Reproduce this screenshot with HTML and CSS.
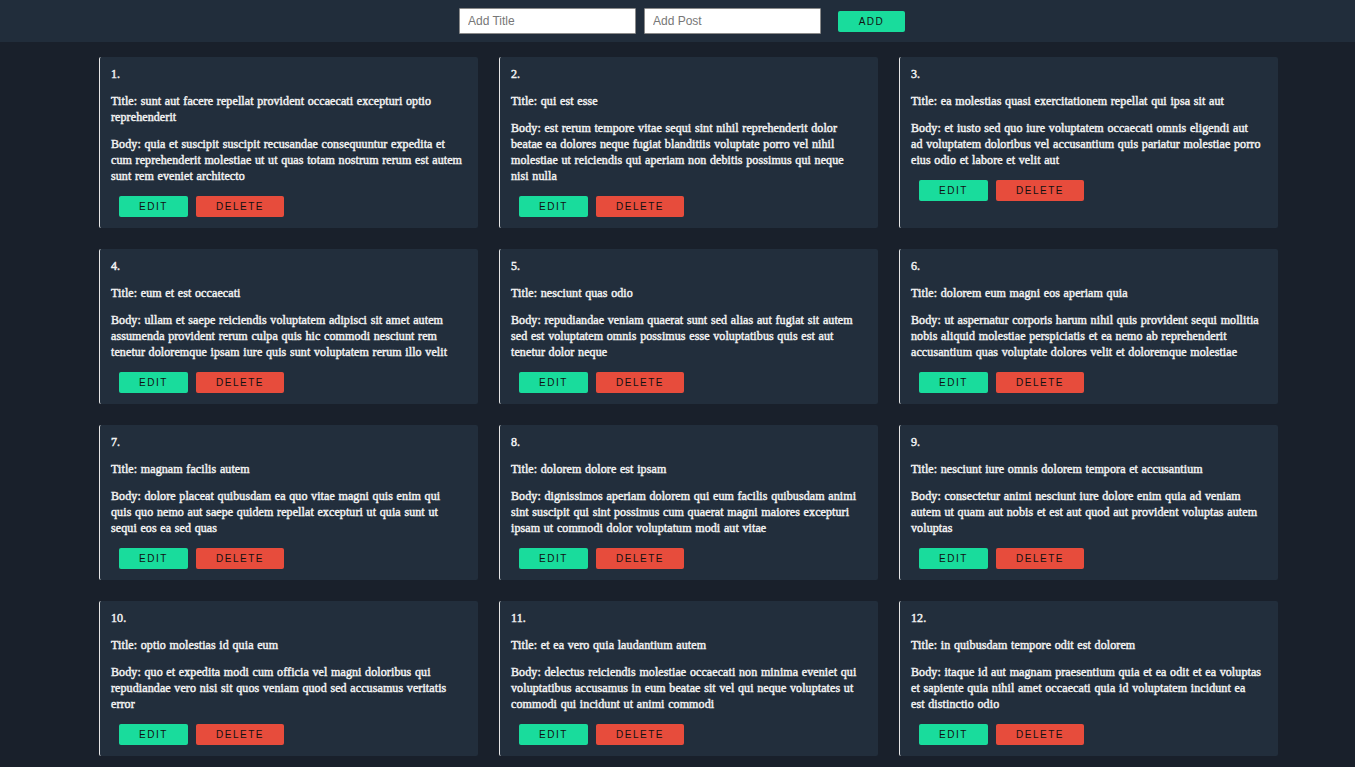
FILE: index.html
```html
<!DOCTYPE html>
<html lang="en">
<head>
<meta charset="utf-8">
<title>Posts</title>
<link rel="stylesheet" href="styles.css">
</head>
<body>
<header class="topbar">
  <input class="field" type="text" placeholder="Add Title">
  <input class="field" type="text" placeholder="Add Post">
  <button class="btn btn-add">ADD</button>
</header>
<main class="grid">
  <article class="card">
    <p>1.</p>
    <p>Title: sunt aut facere repellat provident occaecati excepturi optio reprehenderit</p>
    <p>Body: quia et suscipit suscipit recusandae consequuntur expedita et cum reprehenderit molestiae ut ut quas totam nostrum rerum est autem sunt rem eveniet architecto</p>
    <div class="actions"><button class="btn btn-edit">EDIT</button><button class="btn btn-del">DELETE</button></div>
  </article>
  <article class="card">
    <p>2.</p>
    <p>Title: qui est esse</p>
    <p>Body: est rerum tempore vitae sequi sint nihil reprehenderit dolor beatae ea dolores neque fugiat blanditiis voluptate porro vel nihil molestiae ut reiciendis qui aperiam non debitis possimus qui neque nisi nulla</p>
    <div class="actions"><button class="btn btn-edit">EDIT</button><button class="btn btn-del">DELETE</button></div>
  </article>
  <article class="card">
    <p>3.</p>
    <p>Title: ea molestias quasi exercitationem repellat qui ipsa sit aut</p>
    <p>Body: et iusto sed quo iure voluptatem occaecati omnis eligendi aut ad voluptatem doloribus vel accusantium quis pariatur molestiae porro eius odio et labore et velit aut</p>
    <div class="actions"><button class="btn btn-edit">EDIT</button><button class="btn btn-del">DELETE</button></div>
  </article>
  <article class="card">
    <p>4.</p>
    <p>Title: eum et est occaecati</p>
    <p>Body: ullam et saepe reiciendis voluptatem adipisci sit amet autem assumenda provident rerum culpa quis hic commodi nesciunt rem tenetur doloremque ipsam iure quis sunt voluptatem rerum illo velit</p>
    <div class="actions"><button class="btn btn-edit">EDIT</button><button class="btn btn-del">DELETE</button></div>
  </article>
  <article class="card">
    <p>5.</p>
    <p>Title: nesciunt quas odio</p>
    <p>Body: repudiandae veniam quaerat sunt sed alias aut fugiat sit autem sed est voluptatem omnis possimus esse voluptatibus quis est aut tenetur dolor neque</p>
    <div class="actions"><button class="btn btn-edit">EDIT</button><button class="btn btn-del">DELETE</button></div>
  </article>
  <article class="card">
    <p>6.</p>
    <p>Title: dolorem eum magni eos aperiam quia</p>
    <p>Body: ut aspernatur corporis harum nihil quis provident sequi mollitia nobis aliquid molestiae perspiciatis et ea nemo ab reprehenderit accusantium quas voluptate dolores velit et doloremque molestiae</p>
    <div class="actions"><button class="btn btn-edit">EDIT</button><button class="btn btn-del">DELETE</button></div>
  </article>
  <article class="card">
    <p>7.</p>
    <p>Title: magnam facilis autem</p>
    <p>Body: dolore placeat quibusdam ea quo vitae magni quis enim qui quis quo nemo aut saepe quidem repellat excepturi ut quia sunt ut sequi eos ea sed quas</p>
    <div class="actions"><button class="btn btn-edit">EDIT</button><button class="btn btn-del">DELETE</button></div>
  </article>
  <article class="card">
    <p>8.</p>
    <p>Title: dolorem dolore est ipsam</p>
    <p>Body: dignissimos aperiam dolorem qui eum facilis quibusdam animi sint suscipit qui sint possimus cum quaerat magni maiores excepturi ipsam ut commodi dolor voluptatum modi aut vitae</p>
    <div class="actions"><button class="btn btn-edit">EDIT</button><button class="btn btn-del">DELETE</button></div>
  </article>
  <article class="card">
    <p>9.</p>
    <p>Title: nesciunt iure omnis dolorem tempora et accusantium</p>
    <p>Body: consectetur animi nesciunt iure dolore enim quia ad veniam autem ut quam aut nobis et est aut quod aut provident voluptas autem voluptas</p>
    <div class="actions"><button class="btn btn-edit">EDIT</button><button class="btn btn-del">DELETE</button></div>
  </article>
  <article class="card">
    <p>10.</p>
    <p>Title: optio molestias id quia eum</p>
    <p>Body: quo et expedita modi cum officia vel magni doloribus qui repudiandae vero nisi sit quos veniam quod sed accusamus veritatis error</p>
    <div class="actions"><button class="btn btn-edit">EDIT</button><button class="btn btn-del">DELETE</button></div>
  </article>
  <article class="card">
    <p>11.</p>
    <p>Title: et ea vero quia laudantium autem</p>
    <p>Body: delectus reiciendis molestiae occaecati non minima eveniet qui voluptatibus accusamus in eum beatae sit vel qui neque voluptates ut commodi qui incidunt ut animi commodi</p>
    <div class="actions"><button class="btn btn-edit">EDIT</button><button class="btn btn-del">DELETE</button></div>
  </article>
  <article class="card">
    <p>12.</p>
    <p>Title: in quibusdam tempore odit est dolorem</p>
    <p>Body: itaque id aut magnam praesentium quia et ea odit et ea voluptas et sapiente quia nihil amet occaecati quia id voluptatem incidunt ea est distinctio odio</p>
    <div class="actions"><button class="btn btn-edit">EDIT</button><button class="btn btn-del">DELETE</button></div>
  </article>
</main>
</body>
</html>
```
FILE: styles.css
```css
* { box-sizing: border-box; }
html, body { margin: 0; padding: 0; }
body {
  background: #19202b;
  font-family: "Liberation Serif", "Times New Roman", serif;
  color: #f2f2f2;
}
.topbar {
  height: 42px;
  background: #212d3b;
  display: flex;
  align-items: center;
  justify-content: center;
  padding-left: 5px;
}
.field {
  width: 177px;
  height: 26px;
  margin: 0 4px;
  padding: 0 8px;
  border: 1px solid #8a8a8a;
  border-radius: 1px;
  background: #fff;
  font-family: "Liberation Sans", Arial, sans-serif;
  font-size: 12px;
  color: #333;
  outline: none;
}
.field::placeholder { color: #777; }
.btn {
  height: 21px;
  padding: 0;
  border: none;
  border-radius: 2px;
  font-family: "Liberation Sans", Arial, sans-serif;
  font-size: 10px;
  letter-spacing: 1.5px;
  color: #111;
  cursor: pointer;
}
.btn-add {
  margin-left: 13px;
  width: 67px;
  background: #19dc9c;
}
.btn-edit { background: #19dc9c; width: 69px; }
.btn-del { background: #e74c3c; width: 88px; }
.grid {
  display: grid;
  grid-template-columns: repeat(3, 379px);
  column-gap: 21px;
  row-gap: 21px;
  padding: 15px 0 20px 99px;
}
.card {
  background: #222e3c;
  border-left: 1px solid #e6e6e6;
  border-radius: 2px;
  padding: 9px 15.75px 11px 11px;
  font-size: 12px;
  font-weight: normal;
  letter-spacing: 0.1px;
  word-spacing: 0.5px;
  line-height: 16px;
  -webkit-text-stroke: 0.45px #f2f2f2;
}
.card p { margin: 0 0 11px 0; }
.actions {
  display: flex;
  gap: 8px;
  margin-top: 12px;
  padding-left: 8px;
  -webkit-text-stroke: 0;
  word-spacing: normal;
}
```
